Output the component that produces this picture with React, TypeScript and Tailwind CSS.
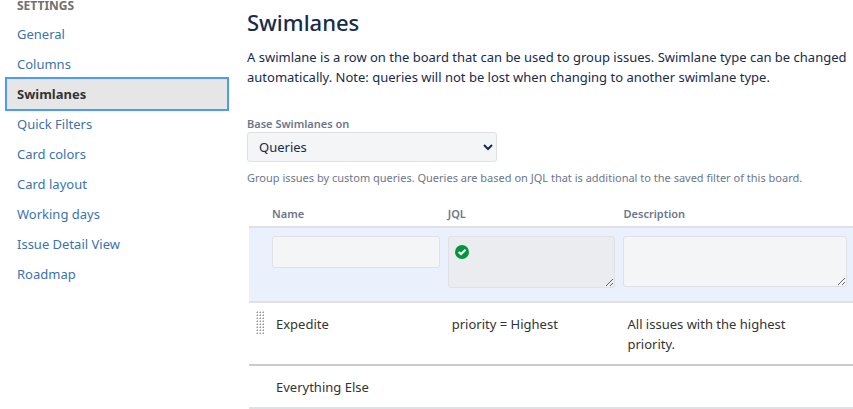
const settings = [
  "General",
  "Columns",
  "Swimlanes",
  "Quick Filters",
  "Card colors",
  "Card layout",
  "Working days",
  "Issue Detail View",
  "Roadmap",
];

const swimlanes = [
  {
    name: "Expedite",
    jql: "priority = Highest",
    description: "All issues with the highest priority.",
    draggable: true,
  },
  { name: "Everything Else", jql: "", description: "", draggable: false },
];

const field =
  "block w-full rounded-[3px] border border-[#dfe1e6] px-2 outline-none";

function Sidebar() {
  return (
    <nav className="w-[229px] shrink-0 pl-[5px]">
      <h2 className="px-3 text-xs leading-3 font-bold text-[#707070]">
        SETTINGS
      </h2>
      <ul className="mt-[7px]">
        {settings.map((item) => (
          <li key={item} className="flex h-[30px] items-center">
            {item === "Swimlanes" ? (
              <a
                href="#"
                aria-current="page"
                className="h-[34px] w-full shrink-0 border-2 border-[#4c9aff] bg-[#e6e6e6] px-2.5 text-[13px] leading-[30px] font-bold text-[#333333]"
              >
                {item}
              </a>
            ) : (
              <a
                href="#"
                className="w-full px-3 text-[13px] leading-[30px] text-[#3b73af]"
              >
                {item}
              </a>
            )}
          </li>
        ))}
      </ul>
    </nav>
  );
}

function CheckIcon() {
  return (
    <svg
      className="pointer-events-none absolute top-[9px] left-[7px]"
      width="14"
      height="14"
      viewBox="0 0 14 14"
    >
      <circle cx="7" cy="7" r="7" fill="#00963c" />
      <path
        d="M3.6 7 6 9 10.6 4.8"
        fill="none"
        stroke="#fff"
        strokeWidth="2.2"
      />
    </svg>
  );
}

function DragHandle() {
  return (
    <svg width="8" height="23" viewBox="0 0 8 23" shapeRendering="crispEdges">
      {[0, 3, 6, 9, 12, 15, 18, 21].map((y) =>
        [0, 3, 6].map((x) => (
          <g key={`${x}-${y}`}>
            <rect x={x} y={y + 1} width="1" height="1" fill="#c4c4c4" />
            <rect x={x + 1} y={y} width="1" height="1" fill="#c4c4c4" />
            <rect x={x + 1} y={y + 1} width="1" height="1" fill="#999999" />
          </g>
        ))
      )}
    </svg>
  );
}

function SwimlaneTable() {
  return (
    <table className="mt-5 ml-0.5 w-full table-fixed text-left">
      <colgroup>
        <col className="w-[19px]" />
        <col className="w-[29%]" />
        <col className="w-[29%]" />
        <col />
      </colgroup>
      <thead>
        <tr className="h-[21px] border-b-2 border-[#dfe1e6] text-[11px] leading-4 text-[#6b778c]">
          <td></td>
          <th className="px-1 align-top font-semibold">Name</th>
          <th className="px-1 align-top font-semibold">JQL</th>
          <th className="px-1 align-top font-semibold">Description</th>
        </tr>
      </thead>
      <tbody>
        <tr className="h-[75px] border-b-2 border-[#dfe1e6] bg-[#eaf0fc]">
          <td></td>
          <td className="px-1 pt-2 align-top">
            <input
              aria-label="Name"
              className={`${field} h-8 bg-[#f4f5f7]`}
            />
          </td>
          <td className="px-1 pt-2 align-top">
            <div className="relative">
              <textarea
                aria-label="JQL"
                className={`${field} h-[52px] bg-[#ebecf0] pl-7`}
              />
              <CheckIcon />
            </div>
          </td>
          <td className="pt-2 pr-2 pl-1 align-top">
            <textarea
              aria-label="Description"
              className={`${field} h-[51px] bg-[#f4f5f7]`}
            />
          </td>
        </tr>
        {swimlanes.map((lane) => (
          <tr
            key={lane.name}
            className="border-b-2 border-[#cccccc] text-[13px] leading-5 text-[#333333] last:border-[#dfe1e6]"
          >
            <td className="pt-2 pl-[7px] align-top">
              {lane.draggable && <DragHandle />}
            </td>
            <td className="px-2 pt-[11px] pb-2.5 align-top">{lane.name}</td>
            <td className="px-2 pt-[11px] pb-2.5 align-top">{lane.jql}</td>
            <td className="pt-[11px] pr-8 pb-2.5 pl-2 align-top">
              {lane.description}
            </td>
          </tr>
        ))}
      </tbody>
    </table>
  );
}

export default function App() {
  return (
    <div className="flex overflow-hidden bg-white font-['Noto_Sans',sans-serif]">
      <Sidebar />
      <main className="ml-[18px] min-w-0 flex-1">
        <h1 className="pt-2 text-[22px] leading-7 font-medium text-[#172b4d]">
          Swimlanes
        </h1>
        <p className="mt-[11px] text-[13px] leading-5 whitespace-nowrap text-[#172b4d]">
          A swimlane is a row on the board that can be used to group issues.
          Swimlane type can be changed
          <br />
          automatically. Note: queries will not be lost when changing to another
          swimlane type.
        </p>
        <label
          htmlFor="base"
          className="mt-[29px] block text-[11px] leading-4 font-semibold text-[#6b778c]"
        >
          Base Swimlanes on
        </label>
        <select
          id="base"
          className="block h-[30px] w-[250px] rounded-[3px] border border-[#dfe1e6] bg-[#f4f5f7] pl-[7px] text-[13px] text-[#172b4d]"
        >
          <option>Queries</option>
        </select>
        <p className="mt-2 text-[11px] leading-4 text-[#6b778c]">
          Group issues by custom queries. Queries are based on JQL that is
          additional to the saved filter of this board.
        </p>
        <SwimlaneTable />
      </main>
    </div>
  );
}
